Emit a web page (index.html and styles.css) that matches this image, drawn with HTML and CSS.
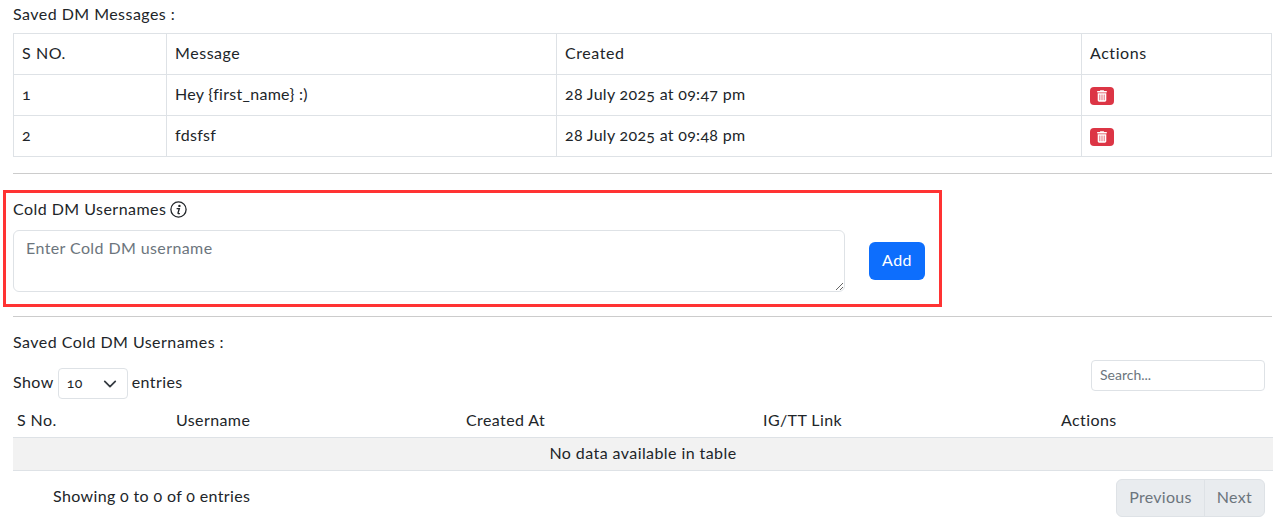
FILE: index.html
```html
<!DOCTYPE html>
<html lang="en">
<head>
<meta charset="utf-8">
<title>Cold DM</title>
<link rel="stylesheet" href="styles.css">
</head>
<body>
<main class="page">
  <h2 class="title first">Saved DM Messages :</h2>
  <table class="msgs">
    <colgroup><col class="m1"><col class="m2"><col class="m3"><col class="m4"></colgroup>
    <thead><tr><th>S NO.</th><th>Message</th><th>Created</th><th>Actions</th></tr></thead>
    <tbody>
      <tr><td class="num">1</td><td>Hey {first_name} :)</td><td>28 July 2025 at 09:47 pm</td><td class="act"><button class="del" aria-label="Delete"><svg viewBox="0 0 448 512" width="10" height="12"><path fill="#fff" d="M135 17.7C140 7 151 0 163 0h122c12 0 23 7 28 17.7L320 32h96c18 0 32 14 32 32s-14 32-32 32H32C14 96 0 82 0 64s14-32 32-32h96l7-14.3zM32 128h384v320c0 35-29 64-64 64H96c-35 0-64-29-64-64V128zm96 64c-9 0-16 7-16 16v224c0 9 7 16 16 16s16-7 16-16V208c0-9-7-16-16-16zm96 0c-9 0-16 7-16 16v224c0 9 7 16 16 16s16-7 16-16V208c0-9-7-16-16-16zm96 0c-9 0-16 7-16 16v224c0 9 7 16 16 16s16-7 16-16V208c0-9-7-16-16-16z"/></svg></button></td></tr>
      <tr><td class="num">2</td><td>fdsfsf</td><td>28 July 2025 at 09:48 pm</td><td class="act"><button class="del" aria-label="Delete"><svg viewBox="0 0 448 512" width="10" height="12"><path fill="#fff" d="M135 17.7C140 7 151 0 163 0h122c12 0 23 7 28 17.7L320 32h96c18 0 32 14 32 32s-14 32-32 32H32C14 96 0 82 0 64s14-32 32-32h96l7-14.3zM32 128h384v320c0 35-29 64-64 64H96c-35 0-64-29-64-64V128zm96 64c-9 0-16 7-16 16v224c0 9 7 16 16 16s16-7 16-16V208c0-9-7-16-16-16zm96 0c-9 0-16 7-16 16v224c0 9 7 16 16 16s16-7 16-16V208c0-9-7-16-16-16zm96 0c-9 0-16 7-16 16v224c0 9 7 16 16 16s16-7 16-16V208c0-9-7-16-16-16z"/></svg></button></td></tr>
    </tbody>
  </table>
  <hr class="rule rule-a">
  <section class="cold">
    <label class="cold-label">Cold DM Usernames
      <svg class="info" viewBox="0 0 17 17" width="17" height="17"><circle cx="8.5" cy="8.5" r="7.6" fill="none" stroke="#212529" stroke-width="1.3"/><circle cx="9.4" cy="4.9" r="1.2" fill="#212529"/><path d="M6.6 7.6h2.7L8.1 11.6c-.2.7.1 1 .6 1h1.2" fill="none" stroke="#212529" stroke-width="1.4"/></svg>
    </label>
    <div class="cold-row">
      <textarea class="area" placeholder="Enter Cold DM username"></textarea>
      <button class="add">Add</button>
    </div>
  </section>
  <hr class="rule rule-b">
  <h2 class="title second">Saved Cold DM Usernames :</h2>
  <div class="controls">
    <div class="length">Show <span class="select"><span class="select-val">10</span><svg viewBox="0 0 16 16" width="16" height="16"><path d="M2 5l6 6 6-6" fill="none" stroke="#343a40" stroke-width="2" stroke-linecap="round" stroke-linejoin="round"/></svg></span> entries</div>
    <input class="search" placeholder="Search...">
  </div>
  <table class="users">
    <colgroup><col class="u1"><col class="u2"><col class="u3"><col class="u4"><col class="u5"></colgroup>
    <thead><tr><th>S No.</th><th>Username</th><th>Created At</th><th>IG/TT Link</th><th>Actions</th></tr></thead>
    <tbody><tr><td colspan="5">No data available in table</td></tr></tbody>
  </table>
  <div class="foot">
    <div class="info-text">Showing 0 to 0 of 0 entries</div>
    <nav class="pager"><span class="pg">Previous</span><span class="pg">Next</span></nav>
  </div>
</main>
</body>
</html>
```
FILE: styles.css
```css
* { box-sizing: border-box; }
html, body { margin: 0; height: 528px; overflow: hidden; background: #fff; }
body { font-family: Lato, "Open Sans", sans-serif; font-size: 16px; line-height: 24px; color: #212529; font-variant-numeric: oldstyle-nums; letter-spacing: .42px; }
.page { padding: 0 8px 0 13px; }
.title { margin: 0; font-size: 16px; font-weight: 400; line-height: 24px; letter-spacing: .46px; }
.first { padding-top: 2px; height: 33px; }
table { border-collapse: collapse; table-layout: fixed; }
.msgs { width: 1258px; }
.msgs th, .msgs td { border: 1px solid #dee2e6; height: 41px; padding: 0 8px 2px; font-weight: 400; text-align: left; letter-spacing: .3px; }
.msgs th { letter-spacing: .55px; }
.msgs .num { font-size: 16px; }
.msgs .act { padding-bottom: 0; }
.m1 { width: 153px; } .m2 { width: 390px; } .m3 { width: 525px; } .m4 { width: 190px; }
.del { display: flex; align-items: center; justify-content: center; width: 24px; height: 18px; margin-top: 2px; padding: 0; border: 0; border-radius: 4px; background: #dc3545; }
.rule { border: 0; border-top: 1px solid #ccc; margin: 0; width: 1259px; }
.rule-a { margin-top: 16px; }
.rule-b { margin-top: 9px; }
.cold { width: 939px; height: 117px; margin: 16px 0 0 -10px; border: 3px solid #f33; padding: 4px 7px 0; }
.cold-label { display: flex; align-items: center; gap: 4px; height: 24px; letter-spacing: .46px; }
.cold-row { display: flex; align-items: center; gap: 24px; margin-top: 9px; }
.area { width: 832px; height: 62px; border: 1px solid #dee2e6; border-radius: 6px; padding: 5px 12px; font: inherit; letter-spacing: .4px; outline: 0; }
.area::placeholder, .search::placeholder { color: #6c757d; opacity: 1; }
.add { width: 56px; height: 38px; border: 0; border-radius: 6px; background: #0d6efd; color: #fff; font: inherit; letter-spacing: .4px; padding: 0 0 2px; }
.second { height: 24px; margin-top: 13px; }
.controls { display: flex; justify-content: space-between; align-items: flex-start; width: 1252px; height: 45px; margin-top: 6px; }
.length { display: flex; align-items: flex-start; gap: 4px; height: 31px; margin-top: 8px; line-height: 27px; }
.select { display: flex; align-items: center; justify-content: space-between; width: 70px; height: 31px; border: 1px solid #dee2e6; border-radius: 4px; padding: 0 10px 2px 8px; font-size: 14px; }
.select svg { width: 14px; height: 14px; margin-top: 2px; }
.search { width: 174px; height: 31px; border: 1px solid #dee2e6; border-radius: 4px; padding: 0 8px 2px; font: inherit; font-size: 14px; letter-spacing: 0; outline: 0; }
.users { width: 1260px; margin-top: 0; }
.users th { height: 32px; padding: 0 4px 2px; font-weight: 400; text-align: left; border-bottom: 1px solid #dee2e6; letter-spacing: .4px; }
.users td { height: 33px; padding: 0 0 2px; text-align: center; background: #f2f2f2; border-bottom: 1px solid #dee2e6; }
.u1 { width: 159px; } .u2 { width: 290px; } .u3 { width: 297px; } .u4 { width: 298px; } .u5 { width: 216px; }
.foot { display: flex; justify-content: space-between; width: 1252px; margin-top: 8px; }
.info-text { padding: 5px 0 0 40px; letter-spacing: .36px; }
.pager { display: flex; height: 38px; border: 1px solid #dee2e6; border-radius: 6px; background: #e9ecef; color: #6c757d; letter-spacing: .3px; }
.pg { display: flex; align-items: center; padding: 0 12px 2px; }
.pg + .pg { border-left: 1px solid #dee2e6; }
```
